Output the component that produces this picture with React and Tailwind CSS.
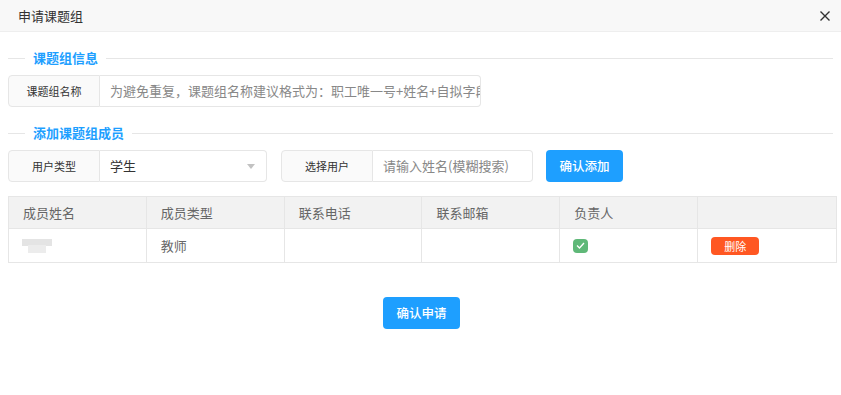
import React from "react";

const font = { fontFamily: '"Noto Sans CJK SC", "Noto Sans", sans-serif' };

function SectionTitle({ children }) {
  return (
    <div className="flex items-center h-[20px] pl-2 pr-2">
      <div className="w-[17px] h-px bg-[#e6e6e6]" />
      <div className="px-2 text-[13px] font-bold text-[#1e9fff] leading-[20px]">{children}</div>
      <div className="flex-1 h-px bg-[#e6e6e6]" />
    </div>
  );
}

export default function App() {
  const heads = ["成员姓名", "成员类型", "联系电话", "联系邮箱", "负责人", ""];
  return (
    <div className="w-[841px] h-[395px] bg-white overflow-hidden" style={font}>
      <div className="h-[32px] bg-[#f8f8f8] border-b border-[#eeeeee] flex items-center justify-between pl-[18px] pr-[11px]">
        <span className="text-[13px] text-[#333]">申请课题组</span>
        <svg width="10" height="10" viewBox="0 0 10 10">
          <path d="M0.5 0.5 L9.5 9.5 M9.5 0.5 L0.5 9.5" stroke="#333" strokeWidth="1.4" />
        </svg>
      </div>

      <div className="mt-4">
        <SectionTitle>课题组信息</SectionTitle>
      </div>

      <div className="mt-[7px] ml-2 flex h-[32px]">
        <div className="w-[92px] bg-[#fafafa] border border-[#e6e6e6] rounded-l-sm flex items-center justify-center text-[11px] text-[#333]">
          课题组名称
        </div>
        <div className="w-[381px] border border-l-0 border-[#e6e6e6] rounded-r-sm flex items-center pl-[10px] overflow-hidden whitespace-nowrap text-[13px] text-[#888]">
          为避免重复，课题组名称建议格式为：职工唯一号+姓名+自拟字段
        </div>
      </div>

      <div className="mt-4">
        <SectionTitle>添加课题组成员</SectionTitle>
      </div>

      <div className="mt-[7px] ml-2 flex h-[32px]">
        <div className="flex">
          <div className="w-[92px] bg-[#fafafa] border border-[#e6e6e6] rounded-l-sm flex items-center justify-center text-[11px] text-[#333]">
            用户类型
          </div>
          <div className="w-[167px] border border-l-0 border-[#e6e6e6] rounded-r-sm flex items-center justify-between pl-[10px] pr-[11px] text-[13px] text-[#333]">
            <span>学生</span>
            <svg width="8" height="5" viewBox="0 0 8 5">
              <path d="M0 0 L8 0 L4 5 Z" fill="#c2c2c2" />
            </svg>
          </div>
        </div>
        <div className="flex ml-[14px]">
          <div className="w-[92px] bg-[#fafafa] border border-[#e6e6e6] rounded-l-sm flex items-center justify-center text-[11px] text-[#333]">
            选择用户
          </div>
          <div className="w-[160px] border border-l-0 border-[#e6e6e6] rounded-r-sm flex items-center pl-[10px] text-[13px] text-[#888] whitespace-nowrap overflow-hidden">
            请输入姓名(模糊搜索)
          </div>
        </div>
        <button className="ml-[13px] w-[77px] h-[32px] bg-[#1e9fff] rounded-sm text-white text-[12.5px] font-medium">
          确认添加
        </button>
      </div>

      <div className="mt-[14px] ml-2 w-[829px] border border-[#e6e6e6]">
        <div className="grid grid-cols-6 h-[32px] bg-[#f2f2f2] border-b border-[#e6e6e6]">
          {heads.map((h, i) => (
            <div
              key={i}
              className={`flex items-center px-[14px] text-[13px] text-[#666] ${i < 5 ? "border-r border-[#e6e6e6]" : ""}`}
            >
              {h}
            </div>
          ))}
        </div>
        <div className="grid grid-cols-6 h-[33px]">
          <div className="flex items-center px-[13px] border-r border-[#e6e6e6]">
            <div className="relative w-[30px] h-[14px]">
              <div className="absolute left-0 top-0 w-[30px] h-[7px] bg-[#e4e4e4]" />
              <div className="absolute left-[6px] top-[6px] w-[18px] h-[8px] bg-[#ececec]" />
            </div>
          </div>
          <div className="flex items-center px-[14px] text-[13px] text-[#666] border-r border-[#e6e6e6]">教师</div>
          <div className="border-r border-[#e6e6e6]" />
          <div className="border-r border-[#e6e6e6]" />
          <div className="flex items-center px-[13px] border-r border-[#e6e6e6]">
            <div className="w-[15px] h-[14px] bg-[#5fb878] rounded-sm flex items-center justify-center">
              <svg width="9" height="7" viewBox="0 0 9 7">
                <path d="M1 3.5 L3.5 6 L8 1" stroke="#fff" strokeWidth="1.3" fill="none" />
              </svg>
            </div>
          </div>
          <div className="flex items-center px-[13px]">
            <button className="w-[48px] h-[18px] bg-[#ff5722] rounded-sm text-white text-[11px] leading-[18px]">
              删除
            </button>
          </div>
        </div>
      </div>

      <div className="mt-[34px] flex justify-center pl-[2px]">
        <button className="w-[77px] h-[32px] bg-[#1e9fff] rounded-sm text-white text-[12.5px] font-medium">
          确认申请
        </button>
      </div>
    </div>
  );
}
